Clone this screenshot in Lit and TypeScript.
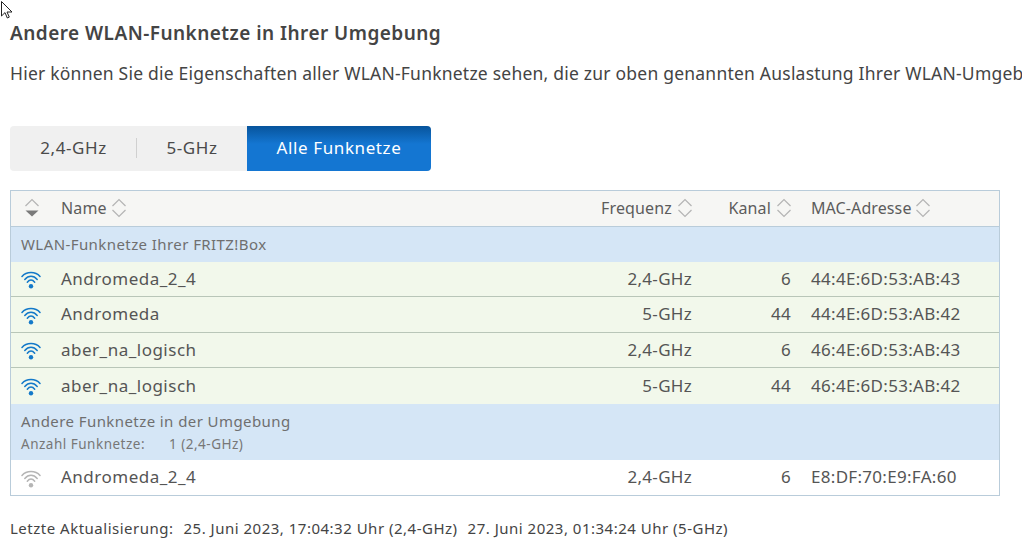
import { LitElement, html, css, svg } from "lit";
import { customElement } from "lit/decorators.js";

const wifi = (cls: string) => html`<svg class="wifi ${cls}" viewBox="0 0 20 18" width="20" height="18" fill="none" stroke="currentColor" stroke-width="1.5" stroke-linecap="round">
  <path d="M1 5.5C5.5.3 14.5.3 19 5.5"/><path d="M3.8 8.5C7.4 4.3 12.6 4.3 16.2 8.5"/><path d="M6.3 11.2C8.6 8.4 11.4 8.4 13.7 11.2"/>
  <circle cx="10" cy="15.2" r="2.2" fill="currentColor" stroke="none"/></svg>`;

const sort = (filled = false) => html`<svg class="sort" viewBox="0 0 16 22" width="16" height="22" fill="none" stroke="#b4b4b4" stroke-width="1.2">
  <path d="M1.5 9L8 2.5L14.5 9"/>
  ${filled
    ? svg`<path d="M1.5 13.5H14.5L8 19.5Z" fill="#7a7a7a" stroke="none"/>`
    : svg`<path d="M1.5 13L8 19.5L14.5 13"/>`}</svg>`;

const own = [
  ["Andromeda_2_4", "2,4-GHz", "6", "44:4E:6D:53:AB:43"],
  ["Andromeda", "5-GHz", "44", "44:4E:6D:53:AB:42"],
  ["aber_na_logisch", "2,4-GHz", "6", "46:4E:6D:53:AB:43"],
  ["aber_na_logisch", "5-GHz", "44", "46:4E:6D:53:AB:42"],
];

@customElement("app-root")
export class AppRoot extends LitElement {
  static styles = css`
    :host { display: block; width: 1022px; height: 555px; overflow: hidden; position: relative; background: #fff;
      font-family: "Noto Sans", sans-serif; color: #4a4a4a; }
    .page { padding: 20px 0 0 10px; white-space: nowrap; }
    .cursor { position: absolute; left: 1px; top: 1px; }
    h1 { margin: 0; font-size: 19px; line-height: 26px; font-weight: 600; color: #444; letter-spacing: 0.46px; }
    .intro { margin: 14px 0 0; font-size: 17.5px; line-height: 26px; color: #444; letter-spacing: 0.22px; width: 1012px; overflow: hidden; }
    .tabs { display: inline-flex; margin-top: 40px; height: 45px; background: #f0f0f0; border-radius: 4px; font-size: 17px; letter-spacing: 0.6px; vertical-align: top; }
    .tab { display: flex; align-items: center; justify-content: center; color: #4a4a4a; padding-bottom: 2px; box-sizing: border-box; }
    .t1 { width: 127px; position: relative; }
    .t1::after { content: ""; position: absolute; right: 0; top: 12px; height: 20px; width: 1px; background: #d0d0d0; }
    .t2 { width: 110px; }
    .t3 { width: 184px; background: linear-gradient(#07549c 0, #1476d2 40%, #1476d2 100%); color: #fff; border-radius: 0 4px 4px 0; }
    .table { width: 990px; box-sizing: border-box; border: 1px solid #b9ccda; margin-top: 19px; }
    .row { display: grid; grid-template-columns: 40px 510px 131px 99px 1fr; height: 35px; align-items: center; font-size: 17px; letter-spacing: 0.3px; box-sizing: border-box; color: #555; }
    .head { height: 36px; background: #f6f6f4; border-bottom: 1px solid #b9ccda; font-size: 16px; letter-spacing: 0.15px; color: #5c5c5c; }
    .cell { display: flex; align-items: center; }
    .name, .r, .mac, .hname { padding-bottom: 2px; }
    .name { letter-spacing: 0.5px; }
    .r { justify-content: flex-end; }
    .head .r { gap: 5px; margin-right: -1px; }
    .head .hname { gap: 4px; }
    .head .mac { gap: 3px; letter-spacing: 0.1px; }
    .sortcol { padding-left: 13px; padding-bottom: 2px; }
    .iconcol { padding-left: 10px; padding-top: 2px; }
    .own { background: #f2f8eb; border-bottom: 1px solid #b9c6b8; }
    .own.last { border-bottom: 0; height: 36px; }
    .own.second { height: 36px; }
    .own.second .name, .own.second .r, .own.second .mac { padding-bottom: 3px; }
    .plain { background: #fff; }
    .mac { padding-left: 20px; }
    .name { padding-left: 10px; }
    .hname { padding-left: 10px; }
    .group { background: #d5e6f6; color: #6f6f6f; padding-left: 10px; font-size: 15px; letter-spacing: 0.42px; line-height: 19px; }
    .g1 { height: 35px; display: flex; align-items: center; }
    .g2 { height: 56px; box-sizing: border-box; padding-top: 8px; }
    .sub { font-size: 13.5px; letter-spacing: 0.5px; line-height: 19px; margin-top: 4px; display: flex; color: #777; }
    .sub span:first-child { width: 148px; }
    .wifi { color: #1479c9; display: block; }
    .wifi.off { color: #b5b5b5; }
    .foot { margin-top: 22px; font-size: 15px; letter-spacing: 0.5px; line-height: 20px; color: #444; display: flex; gap: 10px; }
    svg.sort { display: block; }
  `;

  private row(r: string[], cls: string, icon: string) {
    return html`<div class="row ${cls}">
      <div class="cell iconcol">${wifi(icon)}</div>
      <div class="cell name">${r[0]}</div>
      <div class="cell r">${r[1]}</div>
      <div class="cell r">${r[2]}</div>
      <div class="cell mac">${r[3]}</div>
    </div>`;
  }

  render() {
    return html`
      <svg class="cursor" width="12" height="18" viewBox="0 0 12 18"><path d="M.5.5V15L4 11.6 6.3 17l2-.9L6 11h5Z" fill="#fff" stroke="#222" stroke-width="1"/></svg>
      <div class="page">
        <h1>Andere WLAN-Funknetze in Ihrer Umgebung</h1>
        <p class="intro">Hier können Sie die Eigenschaften aller WLAN-Funknetze sehen, die zur oben genannten Auslastung Ihrer WLAN-Umgebung beitragen.</p>
        <div class="tabs">
          <div class="tab t1">2,4-GHz</div>
          <div class="tab t2">5-GHz</div>
          <div class="tab t3">Alle Funknetze</div>
        </div>
        <div class="table">
          <div class="row head">
            <div class="cell sortcol">${sort(true)}</div>
            <div class="cell hname">Name ${sort()}</div>
            <div class="cell r">Frequenz ${sort()}</div>
            <div class="cell r">Kanal ${sort()}</div>
            <div class="cell mac">MAC-Adresse ${sort()}</div>
          </div>
          <div class="group g1">WLAN-Funknetze Ihrer FRITZ!Box</div>
          ${own.map((r, i) => this.row(r, `own ${i === 1 ? "second" : ""} ${i === 3 ? "last" : ""}`, ""))}
          <div class="group g2">
            <div>Andere Funknetze in der Umgebung</div>
            <div class="sub"><span>Anzahl Funknetze:</span><span>1 (2,4-GHz)</span></div>
          </div>
          ${this.row(["Andromeda_2_4", "2,4-GHz", "6", "E8:DF:70:E9:FA:60"], "plain", "off")}
        </div>
        <div class="foot"><span>Letzte Aktualisierung:</span><span>25. Juni 2023, 17:04:32 Uhr (2,4-GHz)</span><span>27. Juni 2023, 01:34:24 Uhr (5-GHz)</span></div>
      </div>`;
  }
}
